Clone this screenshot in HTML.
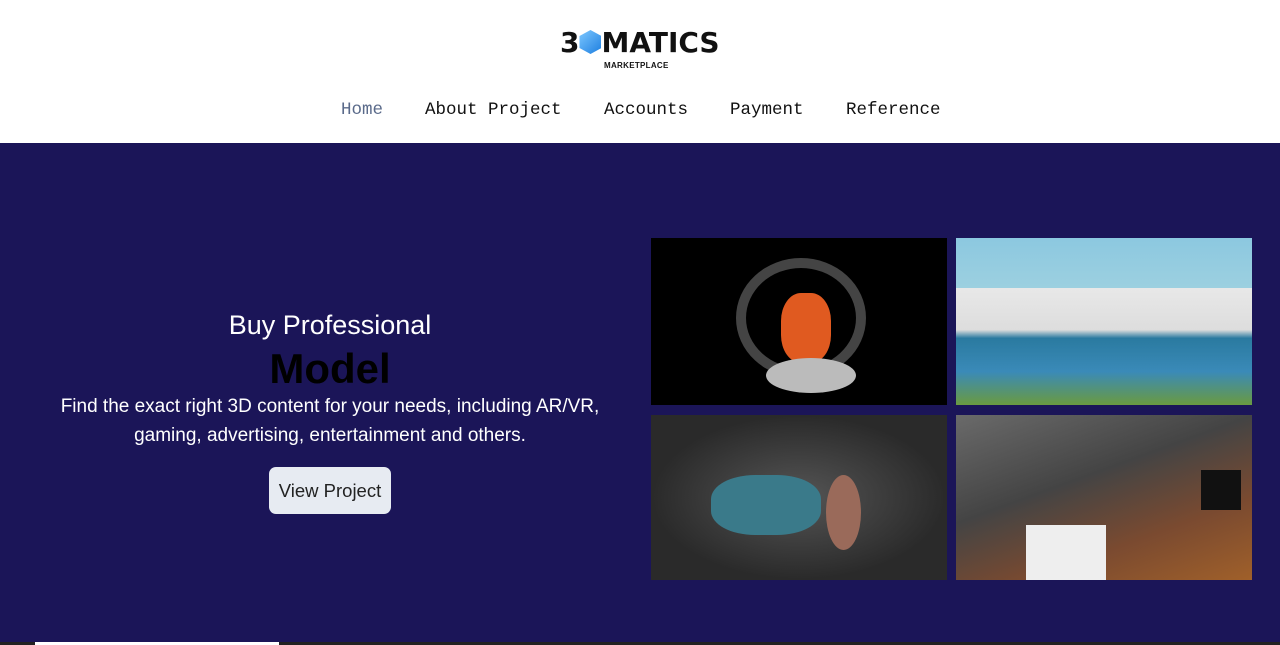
<!DOCTYPE html>
<html><head><style>
*{margin:0;padding:0;box-sizing:border-box}
body{width:1280px;height:645px;overflow:hidden;background:#fff;font-family:"Liberation Sans",sans-serif}
.hdr{height:143px;position:relative}
.logo{position:absolute;left:560px;top:28px;font-weight:bold;font-size:28px;letter-spacing:0;color:#111;line-height:30px;font-family:"DejaVu Sans",sans-serif}
.logo .cube{display:inline-block;width:22px;height:24px;background:linear-gradient(135deg,#7ec8ff,#1e7fe0);clip-path:polygon(50% 0,100% 25%,100% 75%,50% 100%,0 75%,0 25%);vertical-align:-2px}
.logo small{position:absolute;left:44px;top:23px;font-size:8px;letter-spacing:0.3px;font-family:"Liberation Sans",sans-serif}
nav{position:absolute;top:100px;left:0;width:1280px;font-family:"Liberation Mono",monospace;font-size:17.5px}
nav span{position:absolute;color:#111}
.hero{position:absolute;top:143px;left:0;width:1280px;height:502px;background:#1b1558}
.t1{position:absolute;left:0;width:660px;text-align:center;top:167px;color:#fff;font-size:27px}
.t2{position:absolute;left:0;width:660px;text-align:center;top:202px;color:#000;font-size:42px;font-weight:bold}
.t3{position:absolute;left:0;width:660px;text-align:center;top:249px;color:#fff;font-size:19px;line-height:29px}
.btn{position:absolute;left:269px;top:324px;width:122px;height:47px;background:#e7ebf2;border-radius:7px;font-size:18.5px;color:#222;text-align:center;line-height:47px}
.img{position:absolute;width:296px;overflow:hidden}
.bar{position:absolute;top:642px;left:0;width:1280px;height:3px;background:#222}
</style></head><body>
<div class="hdr">
<div class="logo">3<span class="cube"></span>MATICS<small>MARKETPLACE</small></div>
<nav><span style="left:341px;color:#5a6a8a">Home</span><span style="left:425px">About Project</span><span style="left:604px">Accounts</span><span style="left:730px">Payment</span><span style="left:846px">Reference</span></nav>
</div>
<div class="hero">
<div class="t1">Buy Professional</div>
<div class="t2">Model</div>
<div class="t3">Find the exact right 3D content for your needs, including AR/VR,<br>gaming, advertising, entertainment and others.</div>
<div class="btn">View Project</div>
<div class="img" style="left:651px;top:95px;height:167px;background:#000">
<div style="position:absolute;left:85px;top:20px;width:130px;height:120px;border:10px solid #444;border-radius:50%"></div>
<div style="position:absolute;left:130px;top:55px;width:50px;height:70px;background:#e05a20;border-radius:40%"></div>
<div style="position:absolute;left:115px;top:120px;width:90px;height:35px;background:#bbb;border-radius:50%"></div>
</div>
<div class="img" style="left:956px;top:95px;height:167px;background:linear-gradient(#8cc8e0 0,#9cd0e0 30%,#e8e8e8 30%,#ddd 55%,#2a7aa0 60%,#3a8ab8 80%,#6a9a40 100%)"></div>
<div class="img" style="left:651px;top:272px;height:165px;background:radial-gradient(ellipse at 50% 50%,#555,#2a2a2a 70%)">
<div style="position:absolute;left:60px;top:60px;width:110px;height:60px;background:#3a7a8a;border-radius:40%"></div>
<div style="position:absolute;left:175px;top:60px;width:35px;height:75px;background:#9a6a5a;border-radius:50%"></div>
</div>
<div class="img" style="left:956px;top:272px;height:165px;background:linear-gradient(160deg,#6a6a6a,#444 40%,#7a4a30 70%,#a0602a)">
<div style="position:absolute;left:70px;top:110px;width:80px;height:55px;background:#eee"></div>
<div style="position:absolute;left:245px;top:55px;width:40px;height:40px;background:#111"></div>
</div>
</div>
<div class="bar"></div>
<div style="position:absolute;top:642px;left:35px;width:244px;height:3px;background:#fff"></div>
</body></html>
